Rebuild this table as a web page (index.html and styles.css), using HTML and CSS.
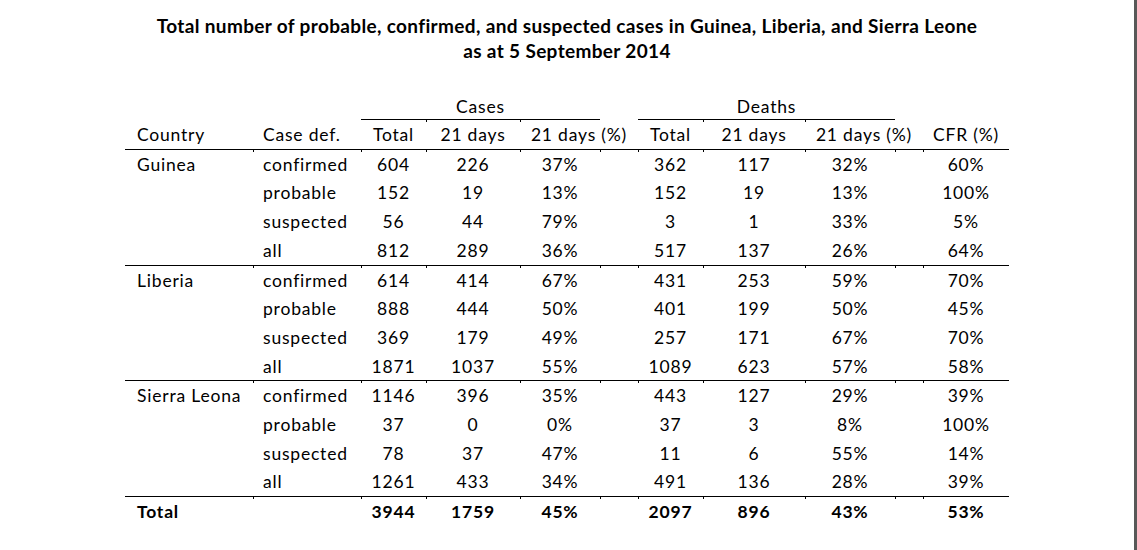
FILE: index.html
```html
<!DOCTYPE html>
<html lang="en">
<head>
<meta charset="utf-8">
<title>Ebola cases table</title>
<link rel="stylesheet" href="styles.css">
</head>
<body>
<div class="page">
  <main class="sheet">
    <h1 class="title">Total number of probable, confirmed, and suspected cases in Guinea, Liberia, and Sierra Leone<br>as at 5 September 2014</h1>
    <table class="cases-table">
      <colgroup>
        <col class="c-country"><col class="c-def"><col class="c-tot"><col class="c-21"><col class="c-pct"><col class="c-sp1">
        <col class="c-tot"><col class="c-21d"><col class="c-pctd"><col class="c-sp2"><col class="c-cfr">
      </colgroup>
      <thead>
        <tr class="group-row">
          <th colspan="2"></th>
          <th colspan="3" class="group">Cases</th>
          <th></th>
          <th colspan="3" class="group">Deaths</th>
          <th colspan="2"></th>
        </tr>
        <tr class="head-row">
          <th class="left">Country</th>
          <th class="left">Case def.</th>
          <th>Total</th>
          <th class="tk">21 days</th>
          <th colspan="2" class="tk">21 days (%)</th>
          <th>Total</th>
          <th class="tk">21 days</th>
          <th colspan="2" class="tk">21 days (%)</th>
          <th>CFR (%)</th>
        </tr>
      </thead>
      <tbody>
        <tr class="first"><td class="left">Guinea</td><td class="left">confirmed</td><td>604</td><td>226</td><td>37%</td><td></td><td>362</td><td>117</td><td>32%</td><td></td><td>60%</td></tr>
        <tr><td></td><td class="left">probable</td><td>152</td><td>19</td><td>13%</td><td></td><td>152</td><td>19</td><td>13%</td><td></td><td>100%</td></tr>
        <tr><td></td><td class="left">suspected</td><td>56</td><td>44</td><td>79%</td><td></td><td>3</td><td>1</td><td>33%</td><td></td><td>5%</td></tr>
        <tr class="last"><td></td><td class="left">all</td><td>812</td><td>289</td><td>36%</td><td></td><td>517</td><td>137</td><td>26%</td><td></td><td>64%</td></tr>

        <tr class="first"><td class="left">Liberia</td><td class="left">confirmed</td><td>614</td><td>414</td><td>67%</td><td></td><td>431</td><td>253</td><td>59%</td><td></td><td>70%</td></tr>
        <tr><td></td><td class="left">probable</td><td>888</td><td>444</td><td>50%</td><td></td><td>401</td><td>199</td><td>50%</td><td></td><td>45%</td></tr>
        <tr><td></td><td class="left">suspected</td><td>369</td><td>179</td><td>49%</td><td></td><td>257</td><td>171</td><td>67%</td><td></td><td>70%</td></tr>
        <tr class="last"><td></td><td class="left">all</td><td>1871</td><td>1037</td><td>55%</td><td></td><td>1089</td><td>623</td><td>57%</td><td></td><td>58%</td></tr>

        <tr class="first"><td class="left">Sierra Leona</td><td class="left">confirmed</td><td>1146</td><td>396</td><td>35%</td><td></td><td>443</td><td>127</td><td>29%</td><td></td><td>39%</td></tr>
        <tr><td></td><td class="left">probable</td><td>37</td><td>0</td><td>0%</td><td></td><td>37</td><td>3</td><td>8%</td><td></td><td>100%</td></tr>
        <tr><td></td><td class="left">suspected</td><td>78</td><td>37</td><td>47%</td><td></td><td>11</td><td>6</td><td>55%</td><td></td><td>14%</td></tr>
        <tr class="last"><td></td><td class="left">all</td><td>1261</td><td>433</td><td>34%</td><td></td><td>491</td><td>136</td><td>28%</td><td></td><td>39%</td></tr>
      </tbody>
      <tfoot>
        <tr class="first total-row"><td class="left">Total</td><td></td><td>3944</td><td>1759</td><td>45%</td><td></td><td>2097</td><td>896</td><td>43%</td><td></td><td>53%</td></tr>
      </tfoot>
    </table>
  </main>
  <div class="edge"></div>
</div>
</body>
</html>
```

FILE: styles.css
```css
html, body {
  margin: 0;
  padding: 0;
  background: #ffffff;
  color: #000000;
  font-family: Lato, "Open Sans", "Liberation Sans", sans-serif;
}

.page {
  display: flex;
  min-height: 550px;
}

.sheet {
  flex: 1;
}

.edge {
  width: 3px;
  background: #585858;
}

.title {
  margin: 13px 0 0;
  font-size: 19px;
  line-height: 25px;
  font-weight: 700;
  text-align: center;
  letter-spacing: 0.35px;
}

.cases-table {
  margin: 30px auto 0;
  width: 884px;
  table-layout: fixed;
  border-collapse: collapse;
  font-size: 17.5px;
  letter-spacing: 0.8px;
}

.c-country { width: 128px; }
.c-def { width: 108px; }
.c-tot { width: 65px; }
.c-21 { width: 94px; }
.c-pct { width: 80px; }
.c-sp1 { width: 38px; }
.c-21d { width: 102px; }
.c-pctd { width: 90px; }
.c-sp2 { width: 28px; }
.c-cfr { width: 86px; }

.cases-table th,
.cases-table td {
  padding: 1px 0 0;
  font-weight: 400;
  text-align: center;
  white-space: nowrap;
  line-height: 27.7px;
  background-repeat: no-repeat;
}

.cases-table .left {
  text-align: left;
}

.cases-table th.left:first-child,
.cases-table td.left:first-child {
  padding-left: 12px;
}

.cases-table td.left:nth-child(2),
.cases-table th.left:nth-child(2) {
  padding-left: 10px;
}

.group-row th {
  line-height: 25px;
}

.group-row th.group {
  border-bottom: 1px solid #000;
}

.head-row th {
  border-bottom: 1px solid #000;
}

.head-row th.tk,
tr.first td:not(:first-child) {
  background-image: linear-gradient(#000, #000);
  background-size: 1px 2px;
  background-position: 0 0;
}

tr.last td {
  border-bottom: 1px solid #000;
}

.total-row td {
  font-weight: 700;
}
```
